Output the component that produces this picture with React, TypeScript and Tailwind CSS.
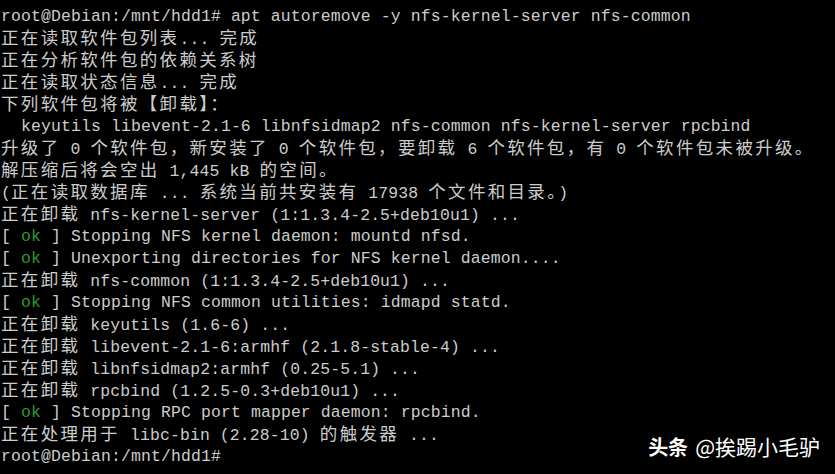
import React from "react";

// Terminal session dump; CJK runs are split out so they can use a CJK font on a 2-column grid.
const LINES: string[] = [
  "root@Debian:/mnt/hdd1# apt autoremove -y nfs-kernel-server nfs-common",
  "正在读取软件包列表... 完成",
  "正在分析软件包的依赖关系树",
  "正在读取状态信息... 完成",
  "下列软件包将被【卸载】：",
  "  keyutils libevent-2.1-6 libnfsidmap2 nfs-common nfs-kernel-server rpcbind",
  "升级了 0 个软件包，新安装了 0 个软件包，要卸载 6 个软件包，有 0 个软件包未被升级。",
  "解压缩后将会空出 1,445 kB 的空间。",
  "(正在读取数据库 ... 系统当前共安装有 17938 个文件和目录。)",
  "正在卸载 nfs-kernel-server (1:1.3.4-2.5+deb10u1) ...",
  "[ ok ] Stopping NFS kernel daemon: mountd nfsd.",
  "[ ok ] Unexporting directories for NFS kernel daemon....",
  "正在卸载 nfs-common (1:1.3.4-2.5+deb10u1) ...",
  "[ ok ] Stopping NFS common utilities: idmapd statd.",
  "正在卸载 keyutils (1.6-6) ...",
  "正在卸载 libevent-2.1-6:armhf (2.1.8-stable-4) ...",
  "正在卸载 libnfsidmap2:armhf (0.25-5.1) ...",
  "正在卸载 rpcbind (1.2.5-0.3+deb10u1) ...",
  "[ ok ] Stopping RPC port mapper daemon: rpcbind.",
  "正在处理用于 libc-bin (2.28-10) 的触发器 ...",
  "root@Debian:/mnt/hdd1#",
];

const CJK = /([\u3000-\u303f\u4e00-\u9fff\uff00-\uffef]+)/;

function Text({ s }: { s: string }) {
  return (
    <>
      {s.split(CJK).map((part, i) =>
        i % 2 === 1 ? (
          <span
            key={i}
            className="text-[17.5px] leading-none tracking-[2.32px] [font-family:'Noto_Sans_CJK_SC',sans-serif]"
          >
            {part}
          </span>
        ) : (
          <span key={i}>{part}</span>
        )
      )}
    </>
  );
}

function Line({ s }: { s: string }) {
  if (s.startsWith("[ ok ]")) {
    return (
      <div className="h-[22px] whitespace-pre">
        [ <span className="text-[#2f9a2f]">ok</span> ]<Text s={s.slice(6)} />
      </div>
    );
  }
  return (
    <div className="h-[22px] whitespace-pre">
      <Text s={s} />
    </div>
  );
}

export default function App() {
  return (
    <div className="relative h-[474px] w-[835px] overflow-hidden bg-black pl-[1px] pt-[6px] text-[16.43px] leading-[22px] tracking-[0.14px] text-[#cccccc] [font-family:'Liberation_Mono','Noto_Sans_CJK_SC',monospace]">
      {LINES.map((l, i) => (
        <Line key={i} s={l} />
      ))}

      <div className="absolute bottom-[17px] right-[15px] flex items-center gap-[7px] tracking-normal text-white [font-family:'Noto_Sans_CJK_SC',sans-serif] [text-shadow:0_0_3px_rgba(0,0,0,0.8)]">
        <span className="text-[20px] font-bold leading-none">头条</span>
        <span className="text-[21px] leading-none">@挨踢小毛驴</span>
      </div>
    </div>
  );
}
